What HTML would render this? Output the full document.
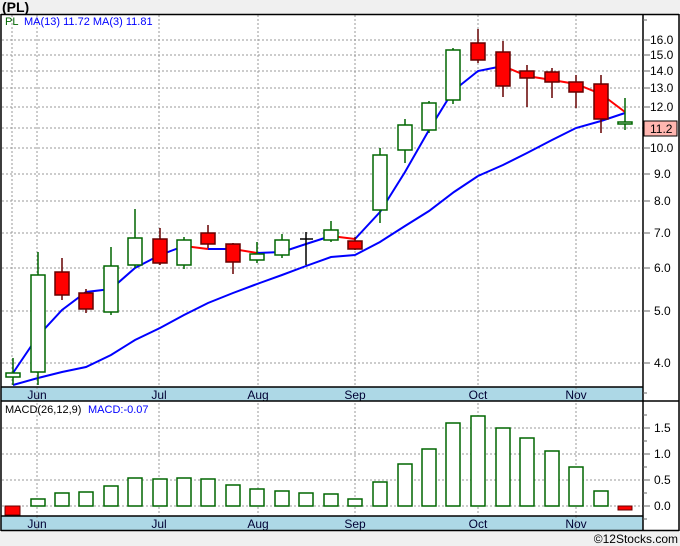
<!DOCTYPE html>
<html><head><meta charset="utf-8"><style>
html,body{margin:0;padding:0;background:#f0f0f0;}
svg{display:block;font-family:"Liberation Sans",sans-serif;}
</style></head><body>
<svg width="680" height="546" viewBox="0 0 680 546" xmlns="http://www.w3.org/2000/svg">
<rect x="0" y="0" width="680" height="546" fill="#f0f0f0"/>
<text x="2" y="12" font-size="14" font-weight="bold" fill="#000">(PL)</text>
<rect x="1" y="14" width="678" height="517" fill="#fff"/>
<g stroke="#999" stroke-width="1" stroke-dasharray="2,2">
<line x1="12" y1="15" x2="12" y2="386"/>
<line x1="37" y1="15" x2="37" y2="530"/><line x1="159" y1="15" x2="159" y2="530"/>
<line x1="258" y1="15" x2="258" y2="530"/><line x1="355" y1="15" x2="355" y2="530"/>
<line x1="478" y1="15" x2="478" y2="530"/><line x1="576" y1="15" x2="576" y2="530"/>
<line x1="2" y1="40" x2="643" y2="40"/><line x1="2" y1="55" x2="643" y2="55"/>
<line x1="2" y1="71" x2="643" y2="71"/><line x1="2" y1="88" x2="643" y2="88"/>
<line x1="2" y1="107" x2="643" y2="107"/><line x1="2" y1="128" x2="643" y2="128"/>
<line x1="2" y1="148" x2="643" y2="148"/><line x1="2" y1="174" x2="643" y2="174"/>
<line x1="2" y1="201" x2="643" y2="201"/><line x1="2" y1="233" x2="643" y2="233"/>
<line x1="2" y1="268" x2="643" y2="268"/><line x1="2" y1="311" x2="643" y2="311"/>
<line x1="2" y1="363" x2="643" y2="363"/>
<line x1="2" y1="428" x2="643" y2="428"/><line x1="2" y1="454" x2="643" y2="454"/>
<line x1="2" y1="480" x2="643" y2="480"/><line x1="2" y1="506" x2="643" y2="506"/>
</g>
<text x="5" y="25" font-size="11" fill="#060">PL</text>
<text x="24" y="25" font-size="11" fill="#00f">MA(13)  11.72  MA(3)  11.81</text>
<polyline fill="none" stroke="#00f" stroke-width="2" points="13,385 38,378 62,372 86,367 111,355 135,340 160,328 184,315 208,303 233,293 257,284 282,275 306,266 331,257 355,255 380,242 405,226 429,211 454,192 478,176 503,165 527,153 552,140 576,128 601,121 625,113"/>
<polyline fill="none" stroke="#00f" stroke-width="2" points="13,373 38,336 62,310 86,292 111,289 135,268 160,255 184,246"/>
<polyline fill="none" stroke="#f00" stroke-width="2" points="184,246 208,249"/>
<polyline fill="none" stroke="#00f" stroke-width="2" points="208,249 233,249"/>
<polyline fill="none" stroke="#f00" stroke-width="2" points="233,249 257,253"/>
<polyline fill="none" stroke="#00f" stroke-width="2" points="257,253 282,252 306,244 331,236"/>
<polyline fill="none" stroke="#f00" stroke-width="2" points="331,236 355,239"/>
<polyline fill="none" stroke="#00f" stroke-width="2" points="355,239 380,212 405,172 429,130 453,91 478,71 503,66"/>
<polyline fill="none" stroke="#f00" stroke-width="2" points="503,66 527,76 552,80 576,84 601,94 625,112"/>
<g stroke-width="1.5">
<g stroke="#060" fill="#fff">
<line x1="13" y1="358" x2="13" y2="385"/><rect x="6" y="373" width="14" height="4"/>
<line x1="38" y1="252" x2="38" y2="385"/><rect x="31" y="275" width="14" height="97"/>
<line x1="111" y1="247" x2="111" y2="315"/><rect x="104" y="266" width="14" height="46"/>
<line x1="135" y1="209" x2="135" y2="268"/><rect x="128" y="238" width="14" height="27"/>
<line x1="184" y1="237" x2="184" y2="269"/><rect x="177" y="240" width="14" height="25"/>
<line x1="257" y1="242" x2="257" y2="263"/><rect x="250" y="254" width="14" height="6"/>
<line x1="282" y1="234" x2="282" y2="258"/><rect x="275" y="240" width="14" height="15"/>
<line x1="331" y1="221" x2="331" y2="242"/><rect x="324" y="230" width="14" height="10"/>
<line x1="380" y1="148" x2="380" y2="223"/><rect x="373" y="155" width="14" height="55"/>
<line x1="405" y1="119" x2="405" y2="163"/><rect x="398" y="125" width="14" height="25"/>
<line x1="429" y1="101" x2="429" y2="133"/><rect x="422" y="103" width="14" height="27"/>
<line x1="453" y1="48" x2="453" y2="104"/><rect x="446" y="50" width="14" height="50"/>
<line x1="625" y1="98" x2="625" y2="130"/><rect x="618" y="122" width="14" height="2"/>
</g>
<line x1="306" y1="232" x2="306" y2="265" stroke="#000"/><line x1="300" y1="239" x2="313" y2="239" stroke="#000"/>
<g stroke="#600" fill="#f00">
<line x1="62" y1="258" x2="62" y2="300"/><rect x="55" y="272" width="14" height="23"/>
<line x1="86" y1="289" x2="86" y2="313"/><rect x="79" y="293" width="14" height="16"/>
<line x1="160" y1="228" x2="160" y2="265"/><rect x="153" y="239" width="14" height="24"/>
<line x1="208" y1="225" x2="208" y2="248"/><rect x="201" y="233" width="14" height="11"/>
<line x1="233" y1="243" x2="233" y2="274"/><rect x="226" y="244" width="14" height="18"/>
<line x1="355" y1="237" x2="355" y2="250"/><rect x="348" y="241" width="14" height="8"/>
<line x1="478" y1="29" x2="478" y2="63"/><rect x="471" y="43" width="14" height="17"/>
<line x1="503" y1="41" x2="503" y2="97"/><rect x="496" y="52" width="14" height="34"/>
<line x1="527" y1="65" x2="527" y2="107"/><rect x="520" y="71" width="14" height="7"/>
<line x1="552" y1="68" x2="552" y2="98"/><rect x="545" y="72" width="14" height="10"/>
<line x1="576" y1="75" x2="576" y2="108"/><rect x="569" y="82" width="14" height="10"/>
<line x1="601" y1="75" x2="601" y2="133"/><rect x="594" y="84" width="14" height="35"/>
</g>
</g>
<text x="5" y="413" font-size="11" fill="#000">MACD(26,12,9)</text>
<text x="88" y="413" font-size="11" fill="#00f">MACD:-0.07</text>
<g stroke="#060" stroke-width="1.5" fill="#fff">
<rect x="31" y="499" width="14" height="7"/><rect x="55" y="493" width="14" height="13"/>
<rect x="79" y="492" width="14" height="14"/><rect x="104" y="486" width="14" height="20"/>
<rect x="128" y="478" width="14" height="28"/><rect x="153" y="479" width="14" height="27"/>
<rect x="177" y="478" width="14" height="28"/><rect x="201" y="479" width="14" height="27"/>
<rect x="226" y="485" width="14" height="21"/><rect x="250" y="489" width="14" height="17"/>
<rect x="275" y="491" width="14" height="15"/><rect x="299" y="493" width="14" height="13"/>
<rect x="324" y="494" width="14" height="12"/><rect x="348" y="499" width="14" height="7"/>
<rect x="373" y="482" width="14" height="24"/><rect x="398" y="464" width="14" height="42"/>
<rect x="422" y="449" width="14" height="57"/><rect x="446" y="423" width="14" height="83"/>
<rect x="471" y="416" width="14" height="90"/><rect x="496" y="428" width="14" height="78"/>
<rect x="520" y="438" width="14" height="68"/><rect x="545" y="451" width="14" height="55"/>
<rect x="569" y="467" width="14" height="39"/><rect x="594" y="491" width="14" height="15"/>
</g>
<g stroke="#600" stroke-width="1" fill="#f00">
<rect x="5" y="506" width="15" height="9"/><rect x="618" y="506" width="14" height="4"/>
</g>
<rect x="1" y="387" width="642" height="14" fill="#add8e6"/>
<rect x="1" y="516" width="642" height="14" fill="#add8e6"/>
<g stroke="#999" stroke-dasharray="2,2"><line x1="37" y1="387" x2="37" y2="401"/><line x1="576" y1="387" x2="576" y2="401"/><line x1="37" y1="516" x2="37" y2="530"/><line x1="576" y1="516" x2="576" y2="530"/></g>
<g font-size="12" fill="#003" text-anchor="middle">
<text x="37" y="399">Jun</text><text x="159" y="399">Jul</text><text x="258" y="399">Aug</text>
<text x="355" y="399">Sep</text><text x="478" y="399">Oct</text><text x="576" y="399">Nov</text>
<text x="37" y="528">Jun</text><text x="159" y="528">Jul</text><text x="258" y="528">Aug</text>
<text x="355" y="528">Sep</text><text x="478" y="528">Oct</text><text x="576" y="528">Nov</text>
</g>
<g stroke="#000" stroke-width="1.5" fill="none">
<line x1="1" y1="14" x2="1" y2="531"/>
<line x1="1" y1="14.5" x2="679" y2="14.5"/>
<line x1="679" y1="14" x2="679" y2="531"/>
<line x1="643" y1="14" x2="643" y2="531"/>
<line x1="1" y1="387" x2="643" y2="387"/>
<line x1="1" y1="401" x2="679" y2="401"/>
<line x1="1" y1="516" x2="643" y2="516"/>
<line x1="1" y1="530.5" x2="679" y2="530.5"/>
</g>
<g stroke="#666" stroke-width="1">
<line x1="643" y1="40" x2="650" y2="40"/><line x1="643" y1="55" x2="650" y2="55"/>
<line x1="643" y1="71" x2="650" y2="71"/><line x1="643" y1="88" x2="650" y2="88"/>
<line x1="643" y1="107" x2="650" y2="107"/><line x1="643" y1="148" x2="650" y2="148"/>
<line x1="643" y1="174" x2="650" y2="174"/><line x1="643" y1="201" x2="650" y2="201"/>
<line x1="643" y1="233" x2="650" y2="233"/><line x1="643" y1="268" x2="650" y2="268"/>
<line x1="643" y1="311" x2="650" y2="311"/><line x1="643" y1="363" x2="650" y2="363"/>
<line x1="643" y1="428" x2="650" y2="428"/><line x1="643" y1="454" x2="650" y2="454"/>
<line x1="643" y1="480" x2="650" y2="480"/><line x1="643" y1="506" x2="650" y2="506"/>
<line x1="643" y1="20" x2="647" y2="20"/><line x1="643" y1="393" x2="647" y2="393"/>
<line x1="643" y1="415" x2="647" y2="415"/><line x1="643" y1="441" x2="647" y2="441"/>
<line x1="643" y1="467" x2="647" y2="467"/><line x1="643" y1="493" x2="647" y2="493"/>
<line x1="643" y1="519" x2="647" y2="519"/>
</g>
<g font-size="12" fill="#000">
<text x="650" y="44">16.0</text><text x="650" y="59">15.0</text><text x="650" y="75">14.0</text>
<text x="650" y="92">13.0</text><text x="650" y="111">12.0</text><text x="650" y="152">10.0</text>
<text x="654" y="178">9.0</text><text x="654" y="205">8.0</text><text x="654" y="237">7.0</text>
<text x="654" y="272">6.0</text><text x="654" y="315">5.0</text><text x="654" y="367">4.0</text>
<text x="654" y="432">1.5</text><text x="654" y="458">1.0</text><text x="654" y="484">0.5</text>
<text x="654" y="510">0.0</text>
</g>
<rect x="644" y="121" width="33" height="15" fill="#ffb6b0" stroke="#000"/>
<text x="650" y="133" font-size="12" fill="#000">11.2</text>
<text x="678" y="543" font-size="12" fill="#000" text-anchor="end">©12Stocks.com</text>
</svg>
</body></html>
